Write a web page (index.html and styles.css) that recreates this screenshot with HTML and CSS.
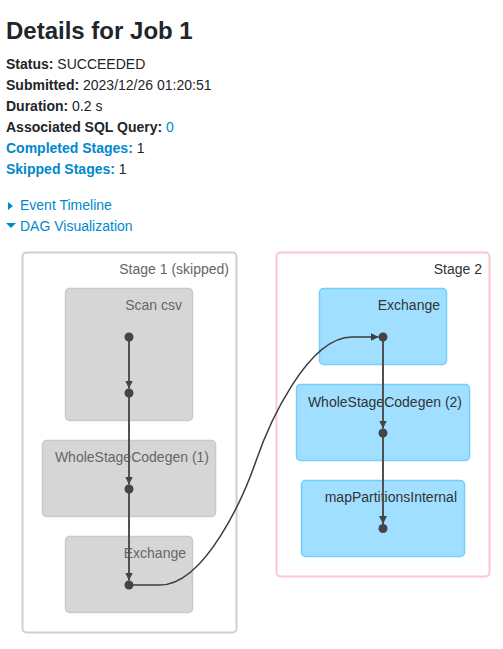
FILE: index.html
```
<!DOCTYPE html>
<html>
<head>
<meta charset="utf-8">
<link rel="stylesheet" href="styles.css">
</head>
<body>
<div class="page">
  <h3 class="title">Details for Job 1</h3>
  <ul class="summary">
    <li><strong>Status:</strong> SUCCEEDED</li>
    <li><strong>Submitted:</strong> 2023/12/26 01:20:51</li>
    <li><strong>Duration:</strong> 0.2 s</li>
    <li><strong>Associated SQL Query:</strong> <a class="link" href="#">0</a></li>
    <li><a class="link" href="#"><strong>Completed Stages:</strong></a> 1</li>
    <li><a class="link" href="#"><strong>Skipped Stages:</strong></a> 1</li>
  </ul>
  <div class="toggles">
    <a class="toggle" href="#"><span class="arrow-closed"></span><span>Event Timeline</span></a>
    <a class="toggle" href="#"><span class="arrow-open"></span><span>DAG Visualization</span></a>
  </div>
</div>
<svg class="dag" width="503" height="409" viewBox="0 240 503 409" xmlns="http://www.w3.org/2000/svg">
  <defs>
    <marker id="arr" viewBox="0 0 10 10" refX="10" refY="5" markerWidth="8" markerHeight="8" markerUnits="userSpaceOnUse" orient="auto">
      <path d="M0,0 L10,5 L0,10 Z" fill="#444"/>
    </marker>
    <marker id="arrs" viewBox="0 0 10 10" refX="10" refY="5" markerWidth="8" markerHeight="8" markerUnits="userSpaceOnUse" orient="auto">
      <path d="M0,0 L10,5 L0,10 Z" fill="#3d3d3d"/>
    </marker>
  </defs>
  <!-- Stage 1 (skipped) -->
  <g class="cluster skipped">
    <rect class="stage-rect" x="22.5" y="252.5" width="214" height="380" rx="4"/>
    <text class="stage-label" x="229" y="274">Stage 1 (skipped)</text>
    <rect class="node-rect" x="65.5" y="288.5" width="127" height="132" rx="4"/>
    <text class="node-label" x="182" y="310">Scan csv</text>
    <rect class="node-rect" x="42.5" y="440.5" width="173" height="76" rx="4"/>
    <text class="node-label" x="209" y="462">WholeStageCodegen (1)</text>
    <rect class="node-rect" x="65.5" y="536.5" width="127" height="76" rx="4"/>
    <text class="node-label" x="186" y="558">Exchange</text>
  </g>
  <!-- Stage 2 -->
  <g class="cluster active">
    <rect class="stage-rect" x="276.5" y="252.5" width="213" height="324" rx="4"/>
    <text class="stage-label" x="482" y="274">Stage 2</text>
    <rect class="node-rect" x="319.5" y="288.5" width="127" height="76" rx="4"/>
    <text class="node-label" x="440" y="310">Exchange</text>
    <rect class="node-rect" x="296.5" y="384.5" width="173" height="76" rx="4"/>
    <text class="node-label" x="462" y="407">WholeStageCodegen (2)</text>
    <rect class="node-rect" x="301.5" y="480.5" width="163" height="76" rx="4"/>
    <text class="node-label" x="457" y="502">mapPartitionsInternal</text>
  </g>
  <!-- edges -->
  <path class="edge" d="M129,337 L129,388.5" marker-end="url(#arr)"/>
  <path class="edge" d="M129,393 L129,484.5" marker-end="url(#arr)"/>
  <path class="edge" d="M129,489 L129,580.5" marker-end="url(#arr)"/>
  <path class="edge" d="M383,337 L383,428.5" marker-end="url(#arr)"/>
  <path class="edge" d="M383,433 L383,524" marker-end="url(#arr)"/>
  <path class="edge cross" d="M129,585 L160,585 C205,585 244,496 256,461 C268,426 307,337 352,337 L378.5,337" marker-end="url(#arrs)"/>
  <g class="dots">
    <circle cx="129" cy="337" r="4.5"/>
    <circle cx="129" cy="393" r="4.5"/>
    <circle cx="129" cy="489" r="4.5"/>
    <circle cx="129" cy="585" r="4.5"/>
    <circle cx="383" cy="337" r="4.5"/>
    <circle cx="383" cy="433" r="4.5"/>
    <circle cx="383" cy="528.5" r="4.5"/>
  </g>
</svg>
</body>
</html>
```
FILE: styles.css
```
html, body {
  margin: 0;
  padding: 0;
  background: #ffffff;
}
body {
  font-family: "Liberation Sans", Arial, sans-serif;
  font-size: 14px;
  line-height: 21px;
  color: #212529;
}
.page {
  padding-left: 6px;
}
.title {
  margin: 16px 0 9px 0;
  font-size: 24px;
  line-height: 29px;
  font-weight: bold;
  color: #212529;
}
.summary {
  list-style: none;
  margin: 0;
  padding: 0;
}
.summary strong {
  font-weight: bold;
}
.link {
  color: #0088cc;
  text-decoration: none;
}
.toggles {
  margin-top: 15px;
  display: flex;
  flex-direction: column;
}
.toggle {
  display: flex;
  align-items: center;
  color: #0088cc;
  text-decoration: none;
  height: 21px;
}
.arrow-closed {
  width: 0;
  height: 0;
  border-top: 4px solid transparent;
  border-bottom: 4px solid transparent;
  border-left: 5px solid #0088cc;
  margin-left: 2px;
  margin-right: 7px;
}
.arrow-open {
  width: 0;
  height: 0;
  border-left: 5px solid transparent;
  border-right: 5px solid transparent;
  border-top: 5px solid #0088cc;
  margin-right: 4px;
  margin-top: -2px;
}
.dag {
  display: block;
  margin-top: 3px;
  font-family: "Liberation Sans", Arial, sans-serif;
}
.stage-rect {
  fill: #ffffff;
  stroke-width: 2px;
}
.skipped .stage-rect {
  stroke: #d0d0d0;
}
.active .stage-rect {
  stroke: #ffc6d0;
}
.node-rect {
  stroke-width: 1.5px;
}
.skipped .node-rect {
  fill: #d6d6d6;
  stroke: #cacaca;
}
.active .node-rect {
  fill: #a0dfff;
  stroke: #74cdfb;
}
.stage-label, .node-label {
  font-size: 14px;
  text-anchor: end;
}
.skipped text {
  fill: #666666;
}
.active text {
  fill: #333333;
}
.edge {
  fill: none;
  stroke: #505050;
  stroke-width: 2px;
}
.edge.cross {
  stroke: #3d3d3d;
  stroke-width: 1.5px;
}
.dots circle {
  fill: #444444;
}
```
